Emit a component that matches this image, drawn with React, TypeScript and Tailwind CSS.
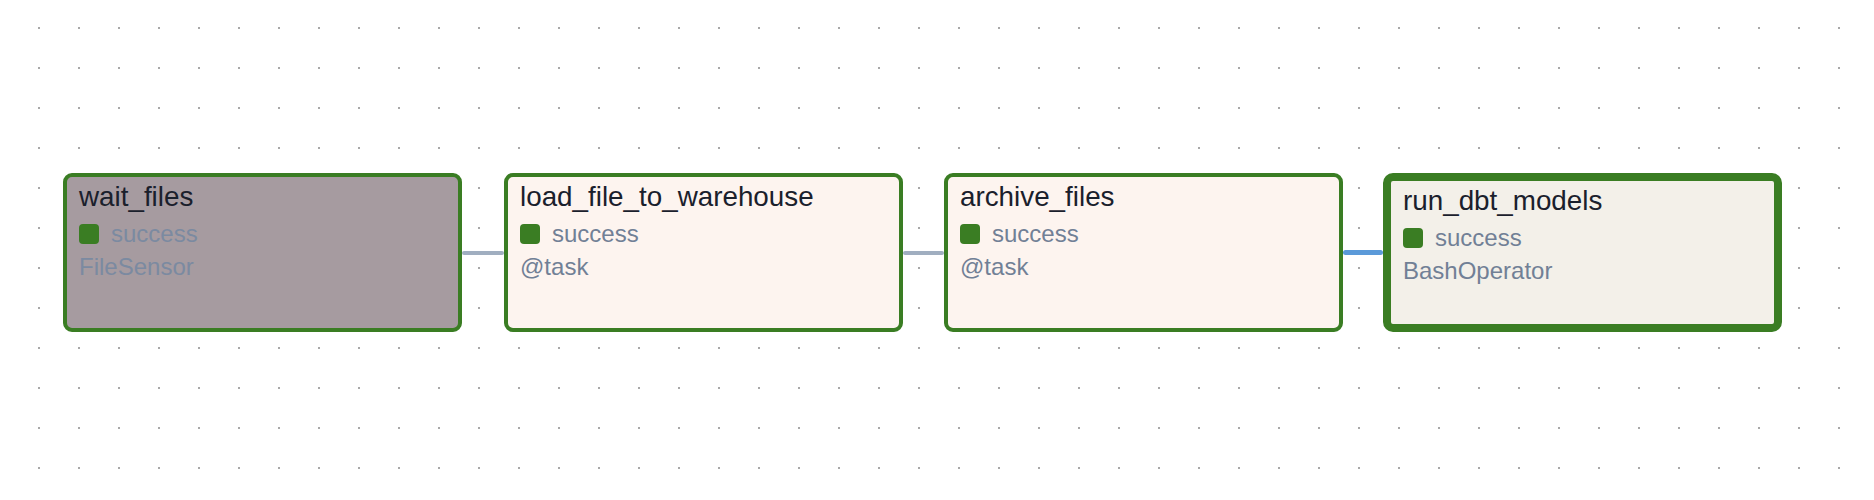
type Task = {
  id: string;
  operator: string;
  bg: string;
  sub: string;
  thick?: boolean;
};

const tasks: Task[] = [
  { id: "wait_files", operator: "FileSensor", bg: "bg-[#a69ba0]", sub: "text-[#7b8aa1]" },
  { id: "load_file_to_warehouse", operator: "@task", bg: "bg-[#fdf4ef]", sub: "text-[#718096]" },
  { id: "archive_files", operator: "@task", bg: "bg-[#fdf4ef]", sub: "text-[#718096]" },
  { id: "run_dbt_models", operator: "BashOperator", bg: "bg-[#f3f0e9]", sub: "text-[#718096]", thick: true },
];

function TaskNode({ task }: { task: Task }) {
  return (
    <div
      className={`w-[399px] h-[159px] shrink-0 flex flex-col px-3 pt-[3px] border-[#3a7d23] ${task.bg} ${
        task.thick ? "border-[8px] rounded-[10px]" : "border-[4px] rounded-[9px]"
      }`}
    >
      <div className="text-[27.8px] leading-[34px] text-[#1a202c] whitespace-nowrap">{task.id}</div>
      <div className="mt-[3px] h-[33px] flex items-center gap-3">
        <span className="w-5 h-5 rounded-[4px] bg-[#3a7d23]" />
        <span className={`text-[24px] leading-[33px] ${task.sub}`}>success</span>
      </div>
      <div className={`text-[24px] leading-[33px] ${task.sub}`}>{task.operator}</div>
    </div>
  );
}

function Edge({ width, active }: { width: string; active?: boolean }) {
  return (
    <div className={`${width} shrink-0 flex items-center`}>
      <div
        className={
          active
            ? "w-full h-[5px] rounded-full bg-[#5b9ad9]"
            : "w-full h-[4px] rounded-full bg-[#a0aec0]"
        }
      />
    </div>
  );
}

export default function App() {
  return (
    <div
      className="w-[1874px] h-[500px] bg-white pt-[173px] pl-[63px] bg-[radial-gradient(circle,#a8a8a8_1.1px,transparent_1.3px)] bg-size-[40px_40px] bg-position-[19px_8px]"
      style={{ fontFamily: '"Liberation Sans", Arial, sans-serif' }}
    >
      <div className="flex items-stretch">
        <TaskNode task={tasks[0]} />
        <Edge width="w-[42px]" />
        <TaskNode task={tasks[1]} />
        <Edge width="w-[41px]" />
        <TaskNode task={tasks[2]} />
        <Edge width="w-[40px]" active />
        <TaskNode task={tasks[3]} />
      </div>
    </div>
  );
}
